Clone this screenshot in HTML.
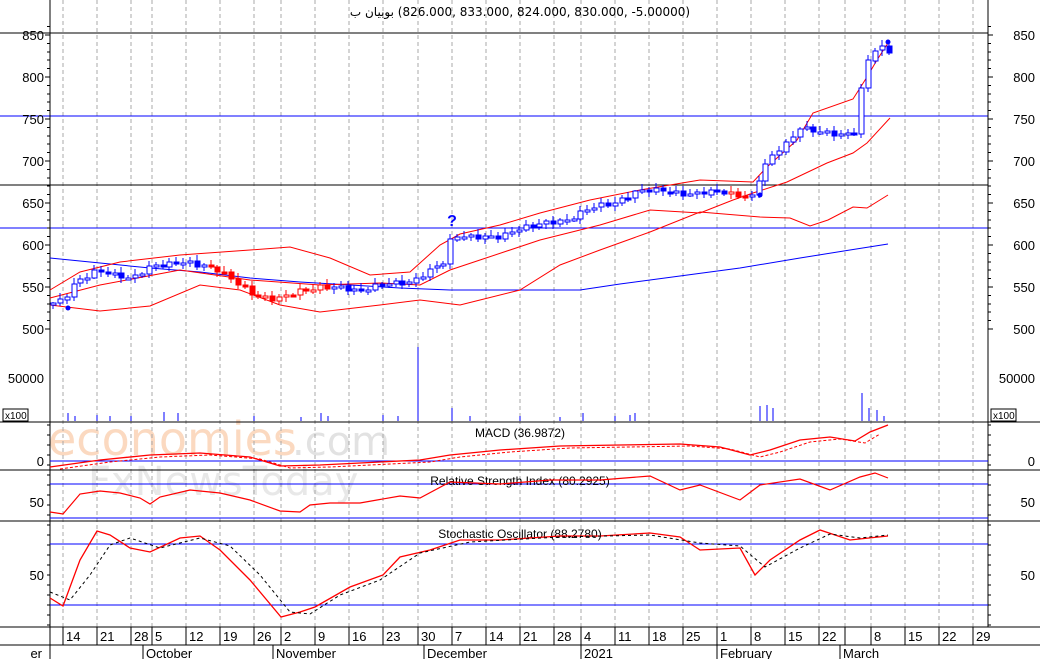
<!DOCTYPE html>
<html><head><meta charset="utf-8"><style>
html,body{margin:0;padding:0;background:#fff;width:1040px;height:659px;overflow:hidden}
svg{display:block;font-family:"Liberation Sans",sans-serif}
line,rect{shape-rendering:crispEdges}
</style></head><body>
<svg id="s" width="1040" height="659" xmlns="http://www.w3.org/2000/svg"></svg>
<script>
var s=document.getElementById('s'),h='';
function L(x1,y1,x2,y2,c,w,d){h+='<line x1="'+x1+'" y1="'+y1+'" x2="'+x2+'" y2="'+y2+'" stroke="'+c+'" stroke-width="'+(w||1)+'"'+(d?' stroke-dasharray="'+d+'"':'')+'/>';}
function P(pts,c,w,d){h+='<polyline fill="none" points="'+pts.map(function(p){return p[0]+','+p[1]}).join(' ')+'" stroke="'+c+'" stroke-width="'+(w||1)+'"'+(d?' stroke-dasharray="'+d+'"':'')+'/>';}
function T(x,y,t,sz,anc,c){h+='<text x="'+x+'" y="'+y+'" font-size="'+(sz||13)+'" text-anchor="'+(anc||'start')+'" fill="'+(c||'#000')+'">'+t+'</text>';}
function interp(k,x){for(var i=0;i<k.length-1;i++){if(x<=k[i+1][0]){var a=k[i],b=k[i+1];return a[1]+(b[1]-a[1])*(x-a[0])/(b[0]-a[0]);}}return k[k.length-1][1];}
// watermark
h+='<text x="48" y="455" font-size="46" fill="#fbd9c0" font-family="DejaVu Sans,sans-serif">economies</text><text x="292" y="455" font-size="40" fill="#e2e2e2" font-family="DejaVu Sans,sans-serif">.com</text>';
h+='<text x="88" y="495" font-size="40" fill="#e8e8e8" font-family="DejaVu Sans,sans-serif">FxNewsToday</text>';
// vertical grid
var vx=[63,97,131,152,186,220,254,281,315,349,383,418,452,486,520,554,581,615,649,683,717,751,785,819,845,871,905,939,973];
vx.forEach(function(x){L(x,0,x,627,'#a8a8a8',1,'4,3');});
function py(p){return 35+(850-p)*0.84;}
L(0,33,988,33,'#000');L(0,116,988,116,'#0000ff');L(0,185,988,185,'#000');L(0,228,988,228,'#0000ff');
L(50,0,50,627,'#000');L(988,0,988,627,'#000');
[850,800,750,700,650,600,550,500].forEach(function(p){var y=py(p);T(44,y+5,p,13,'end');T(1035,y+5,p,13,'end');L(45,y,50,y,'#000');L(988,y,993,y,'#000');});
for(var p=500;p<=860;p+=10){var y=py(p);L(47,y,50,y,'#000');L(988,y,991,y,'#000');}
T(44,383,'50000',13,'end');T(1035,383,'50000',13,'end');
h+='<rect x="3" y="409" width="25" height="12" fill="#fff" stroke="#000"/>';T(5,419,'x100',10);
h+='<rect x="991" y="409" width="25" height="12" fill="#fff" stroke="#000"/>';T(993,419,'x100',10);
h+='<text x="520" y="16" font-size="12" text-anchor="middle" direction="ltr" font-family="DejaVu Sans,Liberation Sans,sans-serif">&#x202A;بوبيان ب&#x202C; (826.000, 833.000, 824.000, 830.000, -5.00000)</text>';
// bands
P([[50,258],[100,263],[150,268],[200,272],[250,278],[300,282],[350,285],[400,288],[450,290],[500,290],[580,290],[620,284],[680,276],[740,268],[800,258],[850,250],[888,244]],'#0000ff',1);
P([[50,290],[80,272],[120,262],[180,255],[250,250],[290,247],[330,258],[370,275],[410,272],[440,245],[460,234],[500,225],[540,213],[590,200],[640,190],[700,180],[753,182],[767,167],[797,140],[813,113],[853,99],[867,77],[877,60],[888,43]],'#ff0000');
P([[50,298],[100,285],[180,270],[250,280],[320,285],[380,283],[420,285],[450,270],[480,260],[540,240],[600,225],[650,210],[700,213],[733,200],[753,193],[787,182],[827,163],[853,153],[867,143],[890,118]],'#ff0000');
P([[50,305],[100,311],[150,306],[200,285],[240,290],[280,305],[320,312],[380,305],[420,300],[460,305],[480,300],[520,290],[560,265],[600,250],[650,232],[700,212],[760,217],[790,218],[810,226],[828,220],[853,207],[867,208],[888,195]],'#ff0000');
var k=[[52,530],[63,535],[75,555],[97,570],[131,560],[152,575],[186,580],[220,570],[254,540],[275,535],[300,545],[320,550],[340,550],[360,545],[383,555],[410,555],[430,570],[445,580],[452,612],[470,610],[500,610],[520,620],[540,625],[570,630],[590,645],[615,650],[640,665],[660,665],[690,660],[717,665],[735,660],[752,657],[762,690],[775,710],[790,725],[800,740],[820,735],[840,730],[855,735],[862,790],[870,830],[880,835],[890,830]];
var prev=530;
for(var x=53,i=0;x<=890;x+=6.85,i++){
 var c=interp(k,x)+Math.sin(i*2.3)*2.5,o=prev;prev=c;
 var up=c>=o,hi=Math.max(o,c)+2+Math.abs(Math.sin(i*1.7))*5,lo=Math.min(o,c)-2-Math.abs(Math.cos(i*1.3))*4;
 var red=(x>210&&x<330)||(x>725&&x<748);var col=red?'#ff0000':'#0000ff';
 var xx=Math.round(x);
 L(xx,py(hi).toFixed(0),xx,py(lo).toFixed(0),col);
 var t=py(Math.max(o,c)),bh=Math.max(2,Math.abs(py(o)-py(c)));
 h+='<rect x="'+(xx-2)+'" y="'+t.toFixed(0)+'" width="5" height="'+bh.toFixed(0)+'" fill="'+(up?'#fff':col)+'" stroke="'+col+'"/>';
}
h+='<circle cx="68" cy="308" r="2.5" fill="#0000ff"/><circle cx="760" cy="195" r="2.5" fill="#0000ff"/><circle cx="888" cy="42" r="2.5" fill="#0000ff"/>';
h+='<text x="452" y="226" font-size="16" font-weight="bold" fill="#0000ff" text-anchor="middle">?</text>';
var vb=[[68,413],[75,416],[97,415],[110,416],[131,416],[164,412],[178,413],[254,416],[301,417],[321,413],[328,416],[383,415],[398,416],[418,347],[452,408],[470,416],[520,416],[560,417],[583,413],[615,416],[630,415],[635,413],[760,406],[767,405],[773,408],[862,393],[869,408],[877,410],[884,416]];
vb.forEach(function(v){L(v[0],v[1],v[0],421,'#0000ff');});
[422,470,521,627,645].forEach(function(y){L(0,y,1040,y,'#000');});
// MACD
L(50,461,988,461,'#0000ff');T(44,466,'0',13,'end');T(1035,466,'0',13,'end');
T(520,437,'MACD (36.9872)',12,'middle');
var mk=[[50,467],[100,460],[150,455],[200,453],[250,457],[280,466],[320,465],[380,462],[420,460],[450,455],[500,450],[560,446],[620,445],[680,444],[720,447],[750,455],[770,450],[800,440],[830,437],[855,441],[870,432],[888,425]];
P(mk,'#ff0000',1.3);P(mk.map(function(p){return [p[0]+10,p[1]+2]}).filter(function(p){return p[0]<=890}),'#ff0000',1,'3,2');
// RSI
L(50,484,988,484,'#0000ff');L(50,518,988,518,'#0000ff');T(44,507,'50',13,'end');T(1035,507,'50',13,'end');
T(520,485,'Relative Strength Index (80.2925)',12,'middle');
P([[50,512],[63,514],[80,494],[100,491],[120,493],[140,498],[150,504],[160,497],[190,490],[220,493],[250,500],[280,511],[300,512],[310,505],[330,503],[360,503],[400,496],[420,498],[450,482],[500,484],[550,480],[600,480],[650,476],[680,490],[700,485],[740,500],[760,485],[800,479],[830,490],[860,477],[875,473],[888,478]],'#ff0000',1.2);
// Stoch
L(50,544,988,544,'#0000ff');L(50,605,988,605,'#0000ff');T(44,580,'50',13,'end');T(1035,580,'50',13,'end');
T(520,538,'Stochastic Oscillator (88.2780)',12,'middle');
var sk=[[50,598],[63,606],[80,560],[97,531],[110,535],[130,548],[150,552],[180,538],[200,536],[220,550],[250,580],[281,617],[300,612],[315,607],[350,587],[383,575],[400,557],[430,550],[460,540],[500,540],[560,536],[600,536],[650,533],[680,537],[700,550],[740,548],[755,575],[770,560],[800,540],[820,530],[850,540],[888,536]];
P(sk,'#ff0000',1.3);
P([[50,592],[70,600],[90,575],[110,545],[130,538],[160,548],[200,538],[230,546],[260,575],[290,612],[310,614],[340,595],[380,580],[420,553],[470,542],[560,537],[650,535],[700,543],[740,546],[765,567],[800,548],[830,534],[860,538],[888,535]],'#000',1,'3,3');
for(var y=425;y<627;y+=10){L(47,y,50,y,'#000');L(988,y,991,y,'#000');}
var dl=[[63,'14'],[97,'21'],[131,'28'],[152,'5'],[186,'12'],[220,'19'],[254,'26'],[281,'2'],[315,'9'],[349,'16'],[383,'23'],[418,'30'],[452,'7'],[486,'14'],[520,'21'],[554,'28'],[581,'4'],[615,'11'],[649,'18'],[683,'25'],[717,'1'],[751,'8'],[785,'15'],[819,'22'],[845,''],[871,'8'],[905,'15'],[939,'22'],[973,'29']];
dl.forEach(function(d){L(d[0],627,d[0],645,'#000');T(d[0]+3,641,d[1],13);});
L(50,627,50,659,'#000');
[[143,'October'],[273,'November'],[424,'December'],[581,'2021'],[717,'February'],[840,'March']].forEach(function(m){L(m[0],645,m[0],659,'#000');T(m[0]+3,658,m[1],13);});
T(42,658,'er',13,'end');
s.innerHTML=h;
</script>
</body></html>
